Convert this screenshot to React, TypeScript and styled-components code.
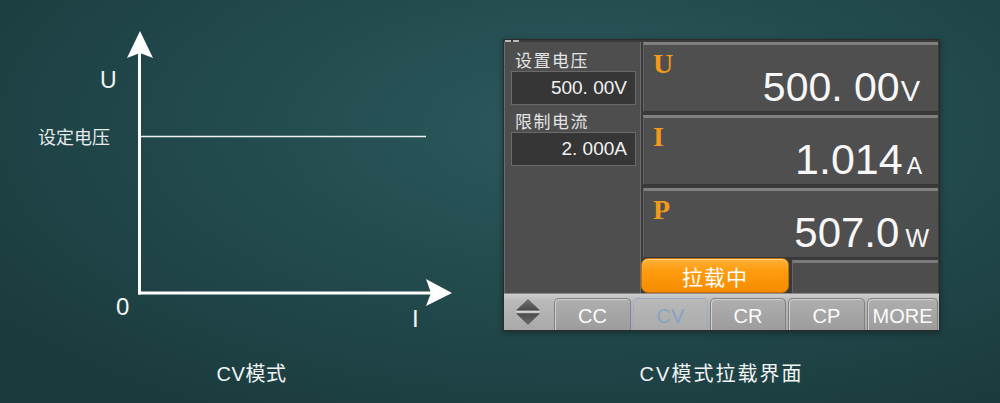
import React from 'react';
import styled, { createGlobalStyle } from 'styled-components';

const Global = createGlobalStyle`
  html, body { margin: 0; padding: 0; }
  body {
    width: 1000px;
    height: 403px;
    overflow: hidden;
    font-family: "Liberation Sans", "Noto Sans CJK SC", sans-serif;
  }
`;

const Page = styled.div`
  width: 1000px;
  height: 403px;
  background: radial-gradient(ellipse 75% 85% at 58% 32%, #2c5a5d 0%, #234b4e 45%, #1a3a3d 100%);
  display: grid;
  grid-template-columns: 503px 437px;
  grid-template-rows: 352px auto;
`;

const Chart = styled.div`
  position: relative;
  width: 503px;
  height: 352px;
`;

const ChartSvg = styled.svg`
  position: absolute;
  left: 0;
  top: 0;
`;

const AxisLabel = styled.span<{ $x: number; $y: number; $size: number }>`
  position: absolute;
  left: ${p => p.$x}px;
  top: ${p => p.$y}px;
  font-family: "Liberation Sans", sans-serif;
  font-size: ${p => p.$size}px;
  line-height: 1;
  color: #f4f6f6;
`;

const SetLabel = styled.span`
  position: absolute;
  left: 38px;
  top: 127px;
  font-family: "Noto Sans CJK SC", sans-serif;
  font-size: 18px;
  line-height: 1;
  color: #e6eaea;
`;

const Caption = styled.div<{ $spacing: number }>`
  padding-top: 10px;
  text-align: center;
  font-family: "Liberation Sans", "Noto Sans CJK SC", sans-serif;
  font-size: 20px;
  line-height: 24px;
  letter-spacing: ${p => p.$spacing}px;
  color: #f2f4f4;
`;

const Screen = styled.div`
  margin-top: 39px;
  width: 437px;
  height: 292px;
  box-sizing: border-box;
  background: #3a3a3a;
  border: 1px solid #2c2c2c;
  box-shadow: 0 2px 6px rgba(0, 0, 0, 0.35);
  display: flex;
  flex-direction: column;
`;

const TopStrip = styled.div`
  height: 2px;
  display: flex;
  gap: 2px;
  padding-left: 1px;
`;

const StripMark = styled.div`
  width: 6px;
  height: 2px;
  background: #b9b9b9;
`;

const Main = styled.div`
  height: 251px;
  display: flex;
  gap: 2px;
  padding-right: 1px;
`;

const SetPanel = styled.div`
  width: 137px;
  box-sizing: border-box;
  background: #4e4e4e;
  border-left: 1px solid #6c6c6c;
  border-right: 1px solid #6c6c6c;
  padding: 8px 4px 0 6px;
  display: flex;
  flex-direction: column;
  gap: 6px;
`;

const Field = styled.div`
  display: flex;
  flex-direction: column;
`;

const FieldLabel = styled.div`
  font-family: "Noto Sans CJK SC", sans-serif;
  font-size: 17px;
  line-height: 20px;
  padding-left: 4px;
  color: #e4e4e4;
  letter-spacing: 1.5px;
`;

const ValueBox = styled.div`
  margin-top: 1px;
  height: 34px;
  box-sizing: border-box;
  background: #363636;
  border: 1px solid #6a6a6a;
  font-family: "Liberation Sans", sans-serif;
  font-size: 19px;
  line-height: 32px;
  text-align: right;
  padding-right: 8px;
  color: #f2f2f2;
`;

const RightCol = styled.div`
  flex: 1;
  display: flex;
  flex-direction: column;
`;

const Measures = styled.div`
  flex: 1;
  display: flex;
  flex-direction: column;
  gap: 3px;
`;

const Measure = styled.div<{ $pr: number }>`
  flex: 1;
  box-sizing: border-box;
  background: #4f4f4f;
  border-top: 3px solid #808080;
  border-left: 1px solid #646464;
  border-bottom: 1px solid #363636;
  display: flex;
  justify-content: space-between;
  padding: 5px ${p => p.$pr}px 3px 9px;
`;

const MeasureTag = styled.span`
  align-self: flex-start;
  font-family: "Liberation Serif", serif;
  font-weight: bold;
  font-size: 28px;
  line-height: 1;
  color: #f39a1a;
`;

const Reading = styled.span<{ $size: number }>`
  align-self: flex-end;
  font-family: "Liberation Sans", sans-serif;
  font-size: ${p => p.$size}px;
  line-height: 1;
  color: #f7f7f7;
  white-space: pre;
`;

const Unit = styled.span<{ $size: number; $gap: number }>`
  font-size: ${p => p.$size}px;
  margin-left: ${p => p.$gap}px;
`;

const BottomRow = styled.div`
  height: 35px;
  display: flex;
  gap: 3px;
`;

const LoadButton = styled.div`
  width: 148px;
  margin-left: -2px;
  box-sizing: border-box;
  border-radius: 7px;
  border: 1px solid #c77000;
  background: linear-gradient(#ffb13a 0%, #ff9c0f 35%, #f58c00 100%);
  box-shadow: inset 0 1px 0 rgba(255, 230, 170, 0.7);
  display: flex;
  align-items: center;
  justify-content: center;
  font-family: "Noto Sans CJK SC", sans-serif;
  font-size: 21px;
  color: #fff;
  letter-spacing: 1px;
`;

const BlankBox = styled.div`
  flex: 1;
  margin-top: 2px;
  background: #4d4d4d;
  border-top: 3px solid #7a7a7a;
  border-left: 1px solid #646464;
`;

const Bar = styled.div`
  flex: 1;
  display: flex;
  align-items: flex-end;
  gap: 2px;
  padding-right: 1px;
  background: linear-gradient(#cdcdcd 0%, #b9b9b9 20%, #a9a9a9 100%);
  border-top: 1px solid #8c8c8c;
`;

const Spinner = styled.div`
  width: 48px;
  align-self: stretch;
  display: flex;
  align-items: center;
  justify-content: center;
`;

const Tab = styled.div<{ $w: number; $active?: boolean }>`
  width: ${p => p.$w}px;
  height: 32px;
  box-sizing: border-box;
  border-radius: 5px 5px 0 0;
  border: 1px solid ${p => (p.$active ? 'rgba(140,170,205,0.55)' : '#828282')};
  border-bottom: none;
  background: ${p => (p.$active ? 'linear-gradient(#b9b9b9, #ababab)' : 'linear-gradient(#afafaf, #9c9c9c)')};
  box-shadow: ${p => (p.$active ? 'none' : 'inset 1px 1px 0 #cfcfcf')};
  font-family: "Liberation Sans", sans-serif;
  font-size: 20px;
  line-height: 34px;
  text-align: center;
  color: ${p => (p.$active ? '#86a3c2' : '#fbfbfb')};
`;

export default function App() {
  return (
    <>
      <Global />
      <Page>
        <Chart>
          <ChartSvg width={503} height={352} viewBox="0 0 503 352">
            <line x1={139.5} y1={52} x2={139.5} y2={294.5} stroke="#ffffff" strokeWidth={3} />
            <line x1={138} y1={293} x2={436} y2={293} stroke="#ffffff" strokeWidth={3} />
            <polygon points="140,31 153,58 140,53 127,58" fill="#ffffff" />
            <polygon points="452,293 426,279 431,293 426,306" fill="#ffffff" />
            <line x1={141} y1={136.5} x2={426} y2={136.5} stroke="#eef2f2" strokeWidth={1.6} />
          </ChartSvg>
          <AxisLabel $x={100} $y={69} $size={23}>U</AxisLabel>
          <SetLabel>设定电压</SetLabel>
          <AxisLabel $x={116} $y={295} $size={24}>0</AxisLabel>
          <AxisLabel $x={412} $y={307} $size={24}>I</AxisLabel>
        </Chart>
        <Screen>
          <TopStrip>
            <StripMark />
            <StripMark />
          </TopStrip>
          <Main>
            <SetPanel>
              <Field>
                <FieldLabel>设置电压</FieldLabel>
                <ValueBox>500. 00V</ValueBox>
              </Field>
              <Field>
                <FieldLabel>限制电流</FieldLabel>
                <ValueBox>2. 000A</ValueBox>
              </Field>
            </SetPanel>
            <RightCol>
              <Measures>
                <Measure $pr={18}>
                  <MeasureTag>U</MeasureTag>
                  <Reading $size={41}>500. 00<Unit $size={29} $gap={1}>V</Unit></Reading>
                </Measure>
                <Measure $pr={16}>
                  <MeasureTag>I</MeasureTag>
                  <Reading $size={43}>1.014<Unit $size={23} $gap={4}>A</Unit></Reading>
                </Measure>
                <Measure $pr={9}>
                  <MeasureTag>P</MeasureTag>
                  <Reading $size={42}>507.0<Unit $size={25} $gap={6}>W</Unit></Reading>
                </Measure>
              </Measures>
              <BottomRow>
                <LoadButton>拉载中</LoadButton>
                <BlankBox />
              </BottomRow>
            </RightCol>
          </Main>
          <Bar>
            <Spinner>
              <svg width={28} height={28} viewBox="0 0 28 28">
                <defs>
                  <linearGradient id="upg" x1="0" y1="0" x2="0" y2="1">
                    <stop offset="0" stopColor="#707070" />
                    <stop offset="1" stopColor="#4a4a4a" />
                  </linearGradient>
                  <linearGradient id="dng" x1="0" y1="0" x2="0" y2="1">
                    <stop offset="0" stopColor="#4a4a4a" />
                    <stop offset="1" stopColor="#6a6a6a" />
                  </linearGradient>
                </defs>
                <polygon points="2,12.5 14,1 26,12.5" fill="url(#upg)" />
                <rect x={2} y={13} width={24} height={1.6} fill="#d4d4d4" />
                <polygon points="2,15.2 26,15.2 14,27" fill="url(#dng)" />
              </svg>
            </Spinner>
            <Tab $w={77}>CC</Tab>
            <Tab $w={75} $active>CV</Tab>
            <Tab $w={76}>CR</Tab>
            <Tab $w={77}>CP</Tab>
            <Tab $w={71}>MORE</Tab>
          </Bar>
        </Screen>
        <Caption $spacing={0.5}>CV模式</Caption>
        <Caption $spacing={2}>CV模式拉载界面</Caption>
      </Page>
    </>
  );
}
